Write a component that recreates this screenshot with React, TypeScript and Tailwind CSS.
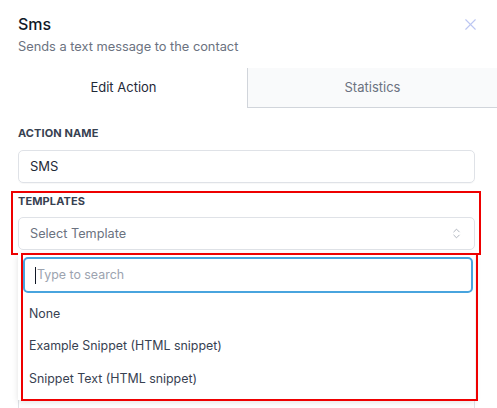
import { X, ChevronsUpDown } from 'lucide-react'

const OPTIONS = ['None', 'Example Snippet (HTML snippet)', 'Snippet Text (HTML snippet)']

export default function App() {
  return (
    <div className="relative h-[408px] w-[497px] overflow-hidden bg-white text-[13px] text-[#374151]" style={{ fontFamily: 'Inter, "Noto Sans", sans-serif' }}>
      {/* Header */}
      <div className="pr-[17px] pl-[18px] pt-[13px]">
        <div className="flex items-center justify-between">
          <h1 className="text-[16px] leading-[22px] font-medium text-[#111827]">Sms</h1>
          <X size={19} strokeWidth={1.4} className="text-[#bcc6f2]" />
        </div>
        <p className="mt-[3px] text-[12.8px] leading-[18px] text-[#6b7280]">Sends a text message to the contact</p>
      </div>

      {/* Tabs */}
      <div className="mt-[12px] flex h-[40px]">
        <div className="flex w-[247px] items-center justify-center text-[13px] text-[#1f2937]">Edit Action</div>
        <div className="flex flex-1 items-center justify-center border-b border-l border-[#d1d5db] bg-[#f9fafb] text-[13px] text-[#6b7280]">
          Statistics
        </div>
      </div>

      <div className="pr-[22px] pl-[18px] pt-[18px]">
        <label className="block text-[11px] leading-[14px] font-bold tracking-[0.01em] text-[#374151] uppercase">Action Name</label>
        <div className="mt-[10px] flex h-[33px] items-center rounded-[5px] border border-[#dfe2e7] px-[11px] text-[13px] text-[#1f2937] shadow-[0_1px_1px_rgba(0,0,0,0.03)]">
          SMS
        </div>

        {/* Templates */}
        <div className="relative mt-[8px] pt-[3px] pb-[5px]">
          <div className="pointer-events-none absolute -left-[7px] -right-[6px] top-0 bottom-0 border-2 border-[#ee0000]" />
          <label className="block text-[11px] leading-[14px] font-bold tracking-[0.01em] text-[#374151] uppercase">Templates</label>
          <div className="mt-[9px] flex h-[33px] items-center justify-between rounded-[5px] border border-[#dfe2e7] px-[11px] text-[12.7px] text-[#6b7280]">
            <span>Select Template</span>
            <ChevronsUpDown size={13} strokeWidth={1.5} className="text-[#9ca3af]" />
          </div>
        </div>

        {/* Field underneath the open menu */}
        <div className="mt-[10px] h-[160px] rounded-[5px] border border-[#dfe2e7]" />
      </div>

      {/* Open dropdown menu */}
      <div className="absolute left-[18px] top-[253px] h-[147px] w-[457px] bg-white shadow-[0_2px_6px_rgba(0,0,0,0.12)]">
        <div className="pr-[2px] pl-[5px] pt-[4px]">
          <div className="flex h-[36px] items-center rounded-[5px] border-2 border-[#48a4de] px-[10px] text-[12.4px] text-[#9ca3af]">
            <span className="mr-[1px] inline-block h-[17px] w-px bg-[#111827]" />
            Type to search
          </div>
        </div>
        <ul className="mt-[5px]">
          {OPTIONS.map((o) => (
            <li key={o} className="flex h-[32.5px] items-center px-[11px] text-[12.4px] text-[#374151]">
              {o}
            </li>
          ))}
        </ul>
      </div>
      <div className="pointer-events-none absolute left-[21px] top-[253px] h-[148px] w-[457px] border-2 border-[#ee0000]" />
    </div>
  )
}
